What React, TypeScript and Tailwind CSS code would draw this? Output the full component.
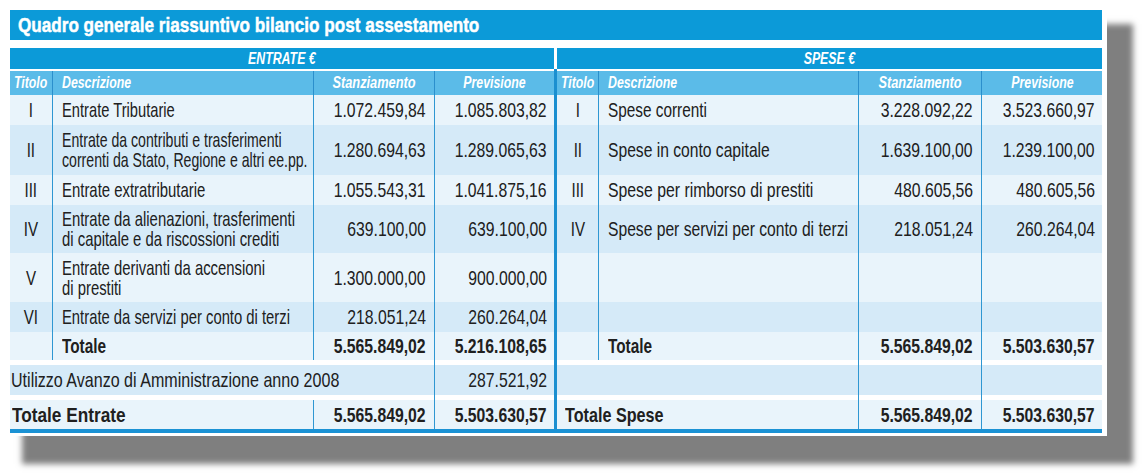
import React from "react";

const F = "[font-family:'Liberation_Sans',Arial,sans-serif]";
const LN = "border-l border-[#2f97d2]";
const LIGHT = "bg-[#e9f4fb]";
const DARK = "bg-[#d5eaf8]";

function TL({ children, sc }: { children: React.ReactNode; sc: string }) {
  return <span className={`inline-block whitespace-nowrap origin-left ${sc}`}>{children}</span>;
}
function TR({ children }: { children: React.ReactNode }) {
  return <span className="inline-block whitespace-nowrap origin-right scale-x-[0.75]">{children}</span>;
}
function TC({ children, sc = "scale-x-[0.77]" }: { children: React.ReactNode; sc?: string }) {
  return <span className={`inline-block whitespace-nowrap origin-center ${sc}`}>{children}</span>;
}

type Side = { t?: string; d?: React.ReactNode; sc?: string; s?: string; p?: string; bold?: boolean };
type Row = { h: string; bg: string; l: Side; r: Side };

const rows: Row[] = [
  {
    h: "h-[30px]",
    bg: LIGHT,
    l: { t: "I", d: "Entrate Tributarie", sc: "scale-x-[0.7]", s: "1.072.459,84", p: "1.085.803,82" },
    r: { t: "I", d: "Spese correnti", sc: "scale-x-[0.73]", s: "3.228.092,22", p: "3.523.660,97" },
  },
  {
    h: "h-[50px]",
    bg: DARK,
    l: {
      t: "II",
      d: (
        <>
          Entrate da contributi e trasferimenti
          <br />
          correnti da Stato, Regione e altri ee.pp.
        </>
      ),
      sc: "scale-x-[0.672]",
      s: "1.280.694,63",
      p: "1.289.065,63",
    },
    r: { t: "II", d: "Spese in conto capitale", sc: "scale-x-[0.745]", s: "1.639.100,00", p: "1.239.100,00" },
  },
  {
    h: "h-[30px]",
    bg: LIGHT,
    l: { t: "III", d: "Entrate extratributarie", sc: "scale-x-[0.71]", s: "1.055.543,31", p: "1.041.875,16" },
    r: { t: "III", d: "Spese per rimborso di prestiti", sc: "scale-x-[0.752]", s: "480.605,56", p: "480.605,56" },
  },
  {
    h: "h-[48px]",
    bg: DARK,
    l: {
      t: "IV",
      d: (
        <>
          Entrate da alienazioni, trasferimenti
          <br />
          di capitale e da riscossioni crediti
        </>
      ),
      sc: "scale-x-[0.708]",
      s: "639.100,00",
      p: "639.100,00",
    },
    r: { t: "IV", d: "Spese per servizi per conto di terzi", sc: "scale-x-[0.745]", s: "218.051,24", p: "260.264,04" },
  },
  {
    h: "h-[49px]",
    bg: LIGHT,
    l: {
      t: "V",
      d: (
        <>
          Entrate derivanti da accensioni
          <br />
          di prestiti
        </>
      ),
      sc: "scale-x-[0.707]",
      s: "1.300.000,00",
      p: "900.000,00",
    },
    r: {},
  },
  {
    h: "h-[30px]",
    bg: DARK,
    l: { t: "VI", d: "Entrate da servizi per conto di terzi", sc: "scale-x-[0.705]", s: "218.051,24", p: "260.264,04" },
    r: {},
  },
  {
    h: "h-[28px]",
    bg: LIGHT,
    l: { t: "", d: "Totale", sc: "scale-x-[0.73]", s: "5.565.849,02", p: "5.216.108,65", bold: true },
    r: { t: "", d: "Totale", sc: "scale-x-[0.73]", s: "5.565.849,02", p: "5.503.630,57", bold: true },
  },
];

function SideCells({ s, bg, right }: { s: Side; bg: string; right?: boolean }) {
  const b = s.bold ? "font-bold" : "";
  return (
    <>
      <div className={`${right ? "w-[41px]" : "w-[42px]"} shrink-0 ${bg} flex items-center justify-center`}>
        {s.t && <TC sc="scale-x-[0.72]">{s.t}</TC>}
      </div>
      <div className={`${right ? "w-[260px]" : "w-[261px]"} shrink-0 ${bg} ${LN} flex items-center pl-[9px] leading-[20px] ${b}`}>
        {s.d && <TL sc={s.sc ?? "scale-x-[0.72]"}>{s.d}</TL>}
      </div>
      <div className={`${right ? "w-[123px]" : "w-[121px]"} shrink-0 ${bg} ${LN} flex items-center justify-end pr-[8px] ${b}`}>
        {s.s && <TR>{s.s}</TR>}
      </div>
      <div className={`${right ? "w-[121px]" : "w-[120px]"} shrink-0 ${bg} ${LN} flex items-center justify-end pr-[7px] ${b}`}>
        {s.p && <TR>{s.p}</TR>}
      </div>
    </>
  );
}

function Divider() {
  return <div className="w-[3px] shrink-0 bg-[#1b8fd0]" />;
}

function Gap() {
  return (
    <div className="h-[5px] flex">
      <div className="w-[424px] bg-white" />
      <div className={`w-[120px] bg-white ${LN}`} />
      <Divider />
      <div className="w-[301px] bg-white" />
      <div className={`w-[123px] bg-white ${LN}`} />
      <div className={`w-[121px] bg-white ${LN}`} />
    </div>
  );
}

export default function App() {
  return (
    <div className={`w-[1144px] h-[473px] bg-white ${F} text-[#202020]`}>
      <div className="w-[1107px] h-[436px] bg-white pt-[10px] pl-[10px] shadow-[24px_26px_6px_2px_rgba(0,0,0,0.5)]">
        <div className="w-[1092px] flex flex-col">
          {/* Title */}
          <div className="h-[30px] bg-[#0c9ad8] flex items-center pl-[8px] text-white font-bold text-[21px] [-webkit-text-stroke:0.5px_white]">
            <TL sc="scale-x-[0.815]">Quadro generale riassuntivo bilancio post assestamento</TL>
          </div>
          <div className="h-[8px]" />
          {/* section headers */}
          <div className="h-[21px] flex text-white italic font-bold text-[16px]">
            <div className="w-[544px] bg-[#0c9ad8] flex items-center justify-center">
              <TC>ENTRATE €</TC>
            </div>
            <div className="w-[3px] bg-white" />
            <div className="w-[545px] bg-[#0c9ad8] flex items-center justify-center">
              <TC>SPESE €</TC>
            </div>
          </div>
          <div className="h-[2px] flex">
            <div className="w-[544px] bg-white" />
            <Divider />
            <div className="w-[545px] bg-white" />
          </div>
          {/* column headers */}
          <div className="h-[24px] flex text-white italic font-bold text-[16px]">
            {[false, true].map((right) => (
              <React.Fragment key={String(right)}>
                {right && <Divider />}
                <div className={`${right ? "w-[41px]" : "w-[42px]"} bg-[#5bbbe8] flex items-center justify-center`}>
                  <TC>Titolo</TC>
                </div>
                <div className={`${right ? "w-[260px]" : "w-[261px]"} bg-[#5bbbe8] border-l border-[#2b8fcc] flex items-center pl-[9px]`}>
                  <TL sc="scale-x-[0.77]">Descrizione</TL>
                </div>
                <div className={`${right ? "w-[123px]" : "w-[121px]"} bg-[#5bbbe8] border-l border-[#2b8fcc] flex items-center justify-center`}>
                  <TC sc="scale-x-[0.8]">Stanziamento</TC>
                </div>
                <div className={`${right ? "w-[121px]" : "w-[120px]"} bg-[#5bbbe8] border-l border-[#2b8fcc] flex items-center justify-center`}>
                  <TC>Previsione</TC>
                </div>
              </React.Fragment>
            ))}
          </div>
          {/* data rows */}
          <div className="flex flex-col text-[21px]">
            {rows.map((r, i) => (
              <div key={i} className={`flex ${r.h}`}>
                <SideCells s={r.l} bg={r.bg} />
                <Divider />
                <SideCells s={r.r} bg={r.bg} right />
              </div>
            ))}
            <Gap />
            {/* Utilizzo */}
            <div className="h-[30px] flex">
              <div className={`w-[424px] ${DARK} flex items-center pl-[1px]`}>
                <TL sc="scale-x-[0.765]">Utilizzo Avanzo di Amministrazione anno 2008</TL>
              </div>
              <div className={`w-[120px] ${DARK} ${LN} flex items-center justify-end pr-[7px]`}>
                <TR>287.521,92</TR>
              </div>
              <Divider />
              <div className={`w-[301px] ${DARK}`} />
              <div className={`w-[123px] ${DARK} ${LN}`} />
              <div className={`w-[121px] ${DARK} ${LN}`} />
            </div>
            <Gap />
            {/* Totale Entrate / Spese */}
            <div className="h-[29px] flex font-bold">
              <div className={`w-[303px] ${LIGHT} flex items-center pl-[2px]`}>
                <TL sc="scale-x-[0.82]">Totale Entrate</TL>
              </div>
              <div className={`w-[121px] ${LIGHT} ${LN} flex items-center justify-end pr-[8px]`}>
                <TR>5.565.849,02</TR>
              </div>
              <div className={`w-[120px] ${LIGHT} ${LN} flex items-center justify-end pr-[7px]`}>
                <TR>5.503.630,57</TR>
              </div>
              <Divider />
              <div className={`w-[301px] ${LIGHT} flex items-center pl-[8px]`}>
                <TL sc="scale-x-[0.77]">Totale Spese</TL>
              </div>
              <div className={`w-[123px] ${LIGHT} ${LN} flex items-center justify-end pr-[8px]`}>
                <TR>5.565.849,02</TR>
              </div>
              <div className={`w-[121px] ${LIGHT} ${LN} flex items-center justify-end pr-[7px]`}>
                <TR>5.503.630,57</TR>
              </div>
            </div>
            <div className="h-[4px] bg-[#1b92d4]" />
          </div>
        </div>
      </div>
    </div>
  );
}
